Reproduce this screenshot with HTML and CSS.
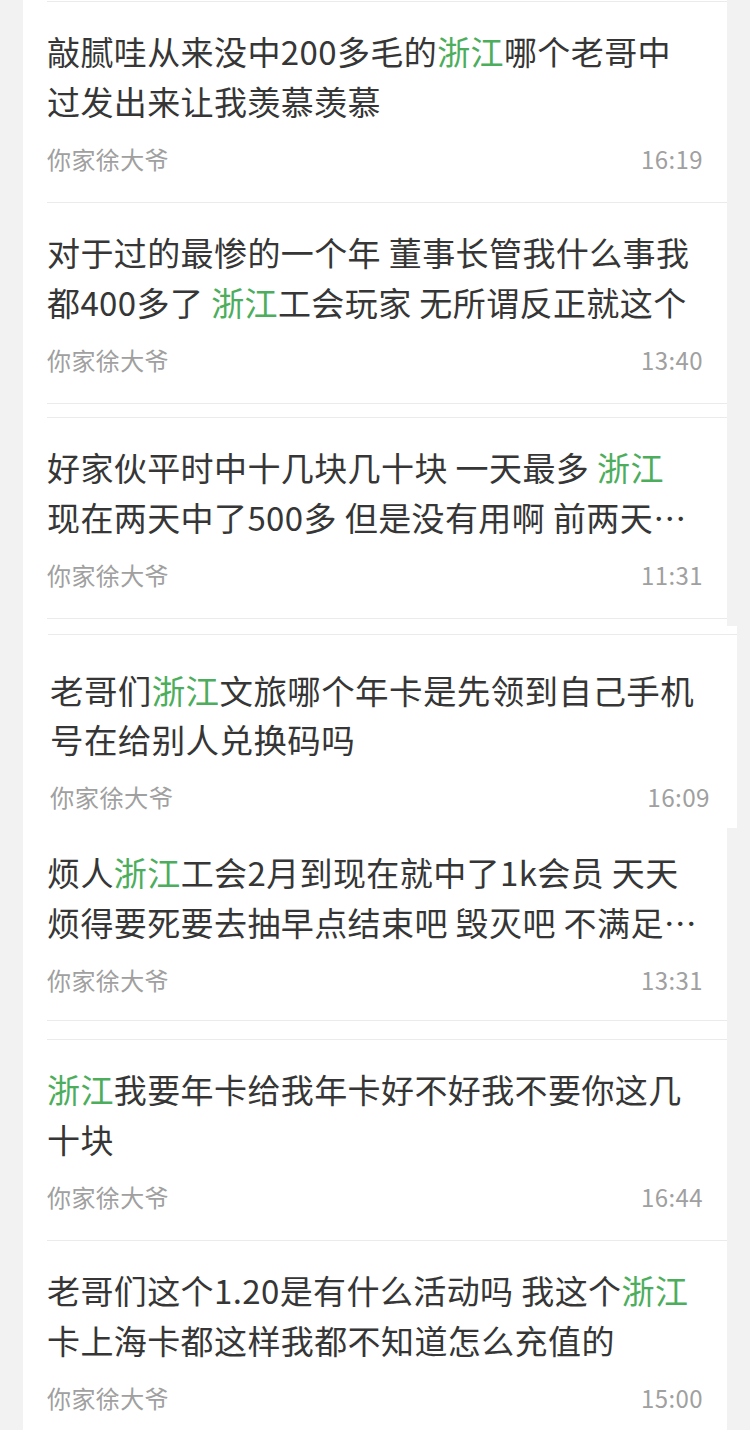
FILE: index.html
```html
<!DOCTYPE html>
<html lang="zh-CN">

<head>
    <meta charset="UTF-8">
    <meta name="viewport" content="width=device-width, initial-scale=1.0">
    <title>搜索结果</title>
    <link rel="stylesheet" href="styles.css">
</head>

<body>
    <div class="feed">
        <div class="top-space"></div>
        <div class="rule"></div>

        <div class="post">
            <p class="post-text">敲腻哇从来没中200多毛的<span class="hl">浙江</span>哪个老哥中<br>过发出来让我羡慕羡慕</p>
            <div class="post-meta"><span>你家徐大爷</span><span>16:19</span></div>
        </div>
        <div class="rule"></div>

        <div class="post">
            <p class="post-text">对于过的最惨的一个年 董事长管我什么事我<br>都400多了 <span class="hl">浙江</span>工会玩家 无所谓反正就这个</p>
            <div class="post-meta"><span>你家徐大爷</span><span>13:40</span></div>
        </div>
        <div class="rule"></div>
        <div class="gap gap-sm"></div>
        <div class="rule"></div>

        <div class="post">
            <p class="post-text">好家伙平时中十几块几十块 一天最多 <span class="hl">浙江</span><br>现在两天中了500多 但是没有用啊 前两天…</p>
            <div class="post-meta"><span>你家徐大爷</span><span>11:31</span></div>
        </div>
        <div class="rule"></div>
        <div class="gap gap-xs"></div>

        <!-- 这一段截图稍微放大了一点 -->
        <div class="wide">
            <div class="gap gap-xs2"></div>
            <div class="rule"></div>
            <div class="post post-zoomed">
                <p class="post-text">老哥们<span class="hl">浙江</span>文旅哪个年卡是先领到自己手机<br>号在给别人兑换码吗</p>
                <div class="post-meta"><span>你家徐大爷</span><span>16:09</span></div>
            </div>
        </div>

        <div class="post post-cut">
            <p class="post-text">烦人<span class="hl">浙江</span>工会2月到现在就中了1k会员 天天<br>烦得要死要去抽早点结束吧 毁灭吧 不满足…</p>
            <div class="post-meta"><span>你家徐大爷</span><span>13:31</span></div>
        </div>
        <div class="rule"></div>
        <div class="gap gap-lg"></div>
        <div class="rule"></div>

        <div class="post">
            <p class="post-text"><span class="hl">浙江</span>我要年卡给我年卡好不好我不要你这几<br>十块</p>
            <div class="post-meta"><span>你家徐大爷</span><span>16:44</span></div>
        </div>
        <div class="rule"></div>

        <div class="post">
            <p class="post-text">老哥们这个1.20是有什么活动吗 我这个<span class="hl">浙江</span><br>卡上海卡都这样我都不知道怎么充值的</p>
            <div class="post-meta"><span>你家徐大爷</span><span>15:00</span></div>
        </div>
    </div>
</body>

</html>
```

FILE: styles.css
```css
body {
    margin: 0;
    background-color: #f2f2f2;
    font-family: "Noto Sans CJK SC", "Noto Sans", sans-serif;
    height: 1430px;
    overflow: hidden;
}

.feed {
    margin-left: 23px;
    width: 704px;
    background-color: #fff;
    min-height: 1430px;
}

.top-space {
    height: 1px;
}

.rule {
    height: 1px;
    margin-left: 24px;
    background-color: #ebebeb;
}

.gap {
    background-color: #fff;
}

.gap-xs {
    height: 7px;
}

.gap-xs2 {
    height: 8px;
}

.gap-sm {
    height: 13px;
}

.gap-lg {
    height: 18px;
}

.post {
    padding: 24px 24px 26px 24px;
}

.post-text {
    margin: 0;
    font-size: 33px;
    letter-spacing: 0.4px;
    line-height: 50px;
    color: #363636;
    white-space: nowrap;
    overflow: hidden;
    display: -webkit-box;
    -webkit-box-orient: vertical;
    -webkit-line-clamp: 2;
}

.hl {
    color: #4cae5c;
}

.post-meta {
    display: flex;
    justify-content: space-between;
    margin-top: 16px;
    font-size: 24px;
    letter-spacing: 0.4px;
    line-height: 34px;
    color: #a0a0a0;
}

/* wider slice */
.wide {
    margin-right: -10px;
    background-color: #fff;
}

.wide .rule {
    margin-left: 25px;
}

.post-zoomed {
    padding: 30px 27px 14px 27px;
}

.post-zoomed .post-text {
    font-size: 33.5px;
    line-height: 49px;
}

.post-zoomed .post-meta {
    margin-top: 17px;
    font-size: 24.3px;
}

.post-cut {
    padding-top: 19px;
    padding-bottom: 23px;
}
```
